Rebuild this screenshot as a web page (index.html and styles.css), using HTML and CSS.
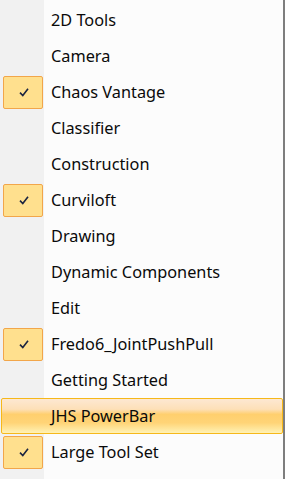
FILE: index.html
```html
<!DOCTYPE html>
<html>
<head>
<meta charset="utf-8">
<link rel="stylesheet" href="styles.css">
</head>
<body>
<div class="menu">
  <div class="item"><span class="gut"></span><span class="label">2D Tools</span></div>
  <div class="item"><span class="gut"></span><span class="label">Camera</span></div>
  <div class="item"><span class="gut"><span class="check"><svg width="10" height="9" viewBox="0 0 10 9"><path d="M1 4.6 L3.8 7.6 L9 0.8" fill="none" stroke="#1b2440" stroke-width="1.6"/></svg></span></span><span class="label">Chaos Vantage</span></div>
  <div class="item"><span class="gut"></span><span class="label">Classifier</span></div>
  <div class="item"><span class="gut"></span><span class="label">Construction</span></div>
  <div class="item"><span class="gut"><span class="check"><svg width="10" height="9" viewBox="0 0 10 9"><path d="M1 4.6 L3.8 7.6 L9 0.8" fill="none" stroke="#1b2440" stroke-width="1.6"/></svg></span></span><span class="label">Curviloft</span></div>
  <div class="item"><span class="gut"></span><span class="label">Drawing</span></div>
  <div class="item"><span class="gut"></span><span class="label">Dynamic Components</span></div>
  <div class="item"><span class="gut"></span><span class="label">Edit</span></div>
  <div class="item"><span class="gut"><span class="check"><svg width="10" height="9" viewBox="0 0 10 9"><path d="M1 4.6 L3.8 7.6 L9 0.8" fill="none" stroke="#1b2440" stroke-width="1.6"/></svg></span></span><span class="label">Fredo6_JointPushPull</span></div>
  <div class="item"><span class="gut"></span><span class="label">Getting Started</span></div>
  <div class="item hot"><span class="gut"></span><span class="label">JHS PowerBar</span></div>
  <div class="item"><span class="gut"><span class="check"><svg width="10" height="9" viewBox="0 0 10 9"><path d="M1 4.6 L3.8 7.6 L9 0.8" fill="none" stroke="#1b2440" stroke-width="1.6"/></svg></span></span><span class="label">Large Tool Set</span></div>
</div>
</body>
</html>
```
FILE: styles.css
```css
html, body {
  margin: 0;
  padding: 0;
}
body {
  width: 285px;
  height: 480px;
  overflow: hidden;
  font-family: "Noto Sans", "Open Sans", sans-serif;
  font-size: 16.3px;
  color: #0a0a0a;
}
.menu {
  box-sizing: border-box;
  width: 285px;
  height: 480px;
  padding-top: 2px;
  border-top: 1px solid #eef1f6;
  border-right: 2px solid #7e7e7e;
  background: linear-gradient(to right, #f1f1f1 0, #f1f1f1 44px, #fcfcfc 44px);
  overflow: hidden;
  margin-top: -1px;
}
.item {
  display: flex;
  align-items: center;
  height: 36px;
  box-sizing: border-box;
  margin: 0 0 0 1px;
}
.gut {
  width: 43px;
  height: 36px;
  display: flex;
  align-items: center;
  flex: none;
}
.check {
  box-sizing: border-box;
  width: 40px;
  height: 33px;
  margin-left: 2px;
  background: #ffe08e;
  border: 1px solid #f2a64a;
  border-radius: 2px;
  display: flex;
  align-items: center;
  justify-content: center;
}
.check svg {
  display: block;
  margin-left: 1px;
}
.label {
  padding-left: 7px;
  white-space: nowrap;
}
.hot {
  border: 1px solid #f6b81a;
  border-radius: 2px;
  background: linear-gradient(to bottom, #fde8d2 0%, #fde0b8 30%, #ffcf6e 45%, #ffd477 70%, #fff2b5 100%);
}
.hot .gut {
  width: 42px;
  height: 34px;
}
```
